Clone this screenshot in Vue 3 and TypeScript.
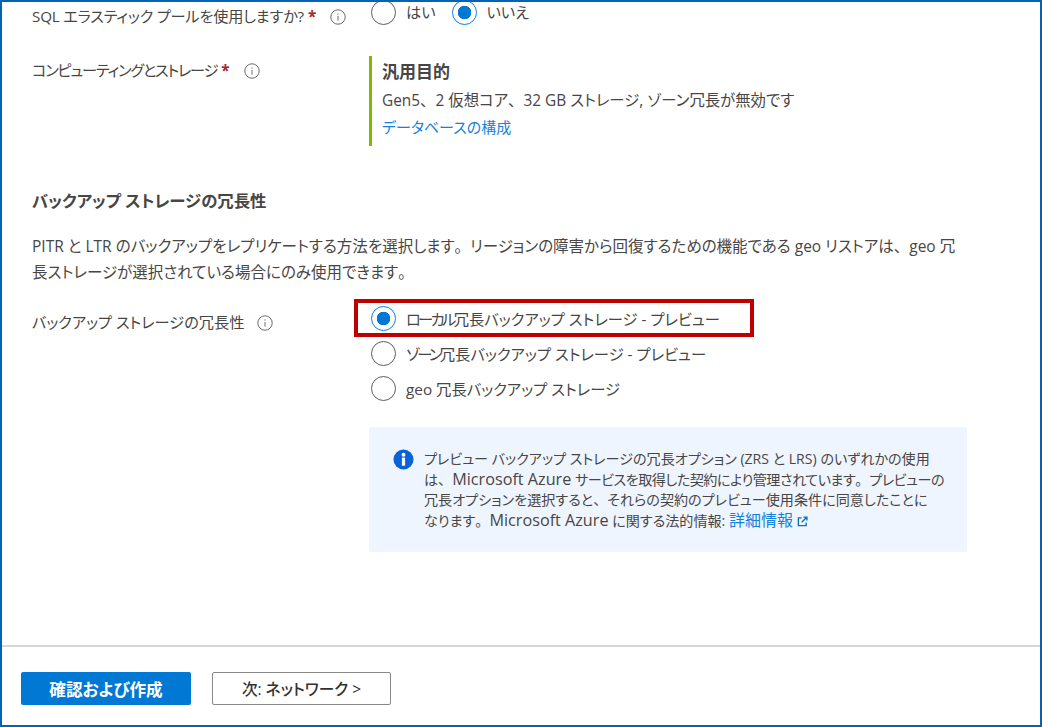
<script setup lang="ts">
const options = [
  { head: 'ローカル', label: '冗長バックアップ ストレージ', suffix: ' - プレビュー', checked: true, marked: true },
  { head: 'ゾーン', label: '冗長バックアップ ストレージ', suffix: ' - プレビュー', checked: false, marked: false },
  { head: 'geo ', label: '冗長バックアップ ストレージ', suffix: '', checked: false, marked: false },
]
</script>

<template>
  <div class="frame">
    <main class="content">
      <section class="row row-first">
        <div class="label"><span class="snug">SQL エラスティック プールを使用しますか?</span> <span class="req">*</span>
          <svg class="info" viewBox="0 0 16 16"><circle cx="8" cy="8" r="7.2" /><path d="M8 7v4.6M8 4.4v1.2" /></svg>
        </div>
        <div class="inline-radios">
          <label class="radio"><span class="dot"></span>はい</label>
          <label class="radio"><span class="dot on"></span>いいえ</label>
        </div>
      </section>

      <section class="row row-compute">
        <div class="label label-compute"><span class="squeezed">コンピューティングとストレージ</span> <span class="req">*</span>
          <svg class="info" viewBox="0 0 16 16"><circle cx="8" cy="8" r="7.2" /><path d="M8 7v4.6M8 4.4v1.2" /></svg>
        </div>
        <div class="summary">
          <div class="summary-title">汎用目的</div>
          <div class="summary-line body">Gen5<span class="wide">、</span>2 仮想コア<span class="wide">、</span>32 GB ストレージ, ゾーン冗長が無効です</div>
          <a class="link summary-line config">データベースの構成</a>
        </div>
      </section>

      <h2 class="heading">バックアップ ストレージの冗長性</h2>
      <p class="desc">PITR と LTR のバックアップをレプリケートする方法を選択します<span class="wide">。</span>リージョンの障害から回復するための機能である geo リストアは<span class="wide">、</span>geo 冗<br>長ストレージが選択されている場合にのみ使用できます<span class="wide">。</span></p>

      <section class="row row-backup">
        <div class="label label-backup">バックアップ ストレージの冗長性
          <svg class="info info-near" viewBox="0 0 16 16"><circle cx="8" cy="8" r="7.2" /><path d="M8 7v4.6M8 4.4v1.2" /></svg>
        </div>
        <div class="backup-col">
          <div class="stack">
            <label v-for="o in options" :key="o.head" class="radio stacked">
              <span class="dot" :class="{ on: o.checked }"></span>
              <span class="opt-text"><span :class="{ head: o.suffix }">{{ o.head }}</span>{{ o.label }}{{ o.suffix }}</span>
              <span v-if="o.marked" class="mark"></span>
            </label>
          </div>
          <div class="notice">
            <svg class="notice-icon" viewBox="0 0 22 22"><circle cx="11" cy="11" r="10.5" fill="#0a62d8" /><rect x="9.3" y="9" width="3.4" height="8.5" fill="#fff" /><circle cx="11" cy="6" r="2" fill="#fff" /></svg>
            <p class="notice-text">プレビュー バックアップ ストレージの冗長オプション (ZRS と LRS) のいずれかの使用<br>は<span class="wide">、</span><span class="latin">Microsoft Azure</span> <span class="tight">サービスを取得した契約により管理されています<span class="wide">。</span>プレビューの</span><br>冗長オプションを選択すると<span class="wide">、</span>それらの契約のプレビュー使用条件に同意したことに<br>なります<span class="wide">。</span><span class="latin">Microsoft Azure</span> に関する法的情報: <a class="link more">詳細情報</a> <svg class="ext" viewBox="0 0 12 12"><path d="M5 2H1.5v8.5H10V7M7 1.2h3.8V5M10.6 1.4 5.2 6.8" /></svg></p>
          </div>
        </div>
      </section>
    </main>

    <footer class="footer">
      <button class="btn primary">確認および作成</button>
      <button class="btn secondary">次: ネットワーク &gt;</button>
    </footer>
  </div>
</template>

<style>
html, body { margin: 0; background: #fff; }
</style>

<style scoped>
.frame {
  box-sizing: border-box;
  width: 1042px;
  height: 727px;
  border: 2px solid #0563b4;
  display: flex;
  flex-direction: column;
  font-family: "Open Sans", "Noto Sans CJK JP", sans-serif;
  font-size: 15.2px;
  font-feature-settings: "palt";
  color: #484644;
  background: #fff;
  overflow: hidden;
}
.wide { font-feature-settings: normal; letter-spacing: 0; }
.snug { letter-spacing: -0.2px; }
.squeezed { letter-spacing: -1.2px; }
.tight { letter-spacing: -0.5px; }
.latin { font-size: 16.2px; }
.content {
  flex: 1;
  padding: 0 0 0 30px;
}
.row { display: flex; }
.label { width: 337px; flex: none; line-height: 24px; white-space: nowrap; }
.req { color: #a4262c; font-weight: 700; }
.info { width: 16px; height: 16px; margin-left: 14px; vertical-align: -3px; fill: none; stroke: #6b6a69; stroke-width: 1; }
.info-near { margin-left: 9px; }
.row-first { height: 52px; padding-top: 2px; }
.row-first .inline-radios { margin-top: -4px; margin-left: 2px; }
.inline-radios { display: flex; gap: 16px; height: 24px; }
.radio { display: flex; align-items: center; line-height: 24px; position: relative; white-space: nowrap; }
.dot {
  box-sizing: border-box;
  width: 25px;
  height: 25px;
  border-radius: 50%;
  border: 1.5px solid #605e5c;
  margin-right: 10px;
  flex: none;
  background: #fff;
}
.dot.on {
  border-color: #0f7fdc;
  background: radial-gradient(circle, #0078d4 0 6.5px, #fff 7px);
}
.label-compute { padding-top: 2px; }
.summary {
  border-left: 3px solid #7fba00;
  padding-left: 10px;
  height: 90px;
}
.summary-title { font-weight: 700; font-size: 17px; line-height: 32px; height: 30px; }
.summary-line { display: block; line-height: 28px; height: 28px; white-space: nowrap; }
.body { font-size: 15.4px; margin-top: 1px; }
.config { font-size: 15px; margin-top: -2px; }
.row-compute { height: 92px; }
.link { color: #1482dc; }
.heading { margin: 41px 0 0; font-size: 16.4px; line-height: 24px; font-weight: 700; }
.desc { margin: 20px 0 0; width: 960px; line-height: 26px; white-space: nowrap; font-size: 15.5px; }
.row-backup { margin-top: 21px; }
.label-backup { padding-top: 4px; }
.backup-col { margin-left: 2px; }
.stack { display: flex; flex-direction: column; gap: 10px; }
.stacked { height: 25px; }
.opt-text { font-size: 15.3px; white-space: pre; }
.head { letter-spacing: -2.7px; }
.mark {
  position: absolute;
  left: -17px;
  top: -7px;
  width: 400px;
  height: 38px;
  box-sizing: border-box;
  border: 4px solid #c00000;
  pointer-events: none;
}
.notice {
  box-sizing: border-box;
  width: 598px;
  height: 125px;
  margin-top: 26px;
  margin-left: -2px;
  background: #eff5fe;
  border-radius: 2px;
  padding: 22px 20px 0 24px;
  display: flex;
  gap: 10px;
}
.notice-icon { width: 21px; height: 21px; flex: none; }
.notice-text { margin: 0; font-size: 14.1px; line-height: 20px; width: 540px; white-space: nowrap; }
.more { font-size: 16px; }
.ext { width: 11px; height: 11px; fill: none; stroke: #0f6cbd; stroke-width: 1.5; vertical-align: -1px; }
.footer {
  flex: none;
  height: 80px;
  border-top: 2px solid #d6d6d6;
  box-sizing: border-box;
  padding: 25px 0 0 19px;
  display: flex;
  gap: 21px;
  align-items: flex-start;
}
.btn {
  font-family: inherit;
  font-feature-settings: "palt";
  height: 33px;
  border-radius: 2px;
  padding: 0;
}
.primary {
  width: 170px;
  font-size: 16.6px;
  background: #0078d4;
  color: #fff;
  border: none;
  font-weight: 700;
}
.secondary {
  width: 179px;
  font-size: 15.6px;
  background: #fff;
  color: #323130;
  border: 1px solid #8a8886;
  font-weight: 500;
}
</style>
